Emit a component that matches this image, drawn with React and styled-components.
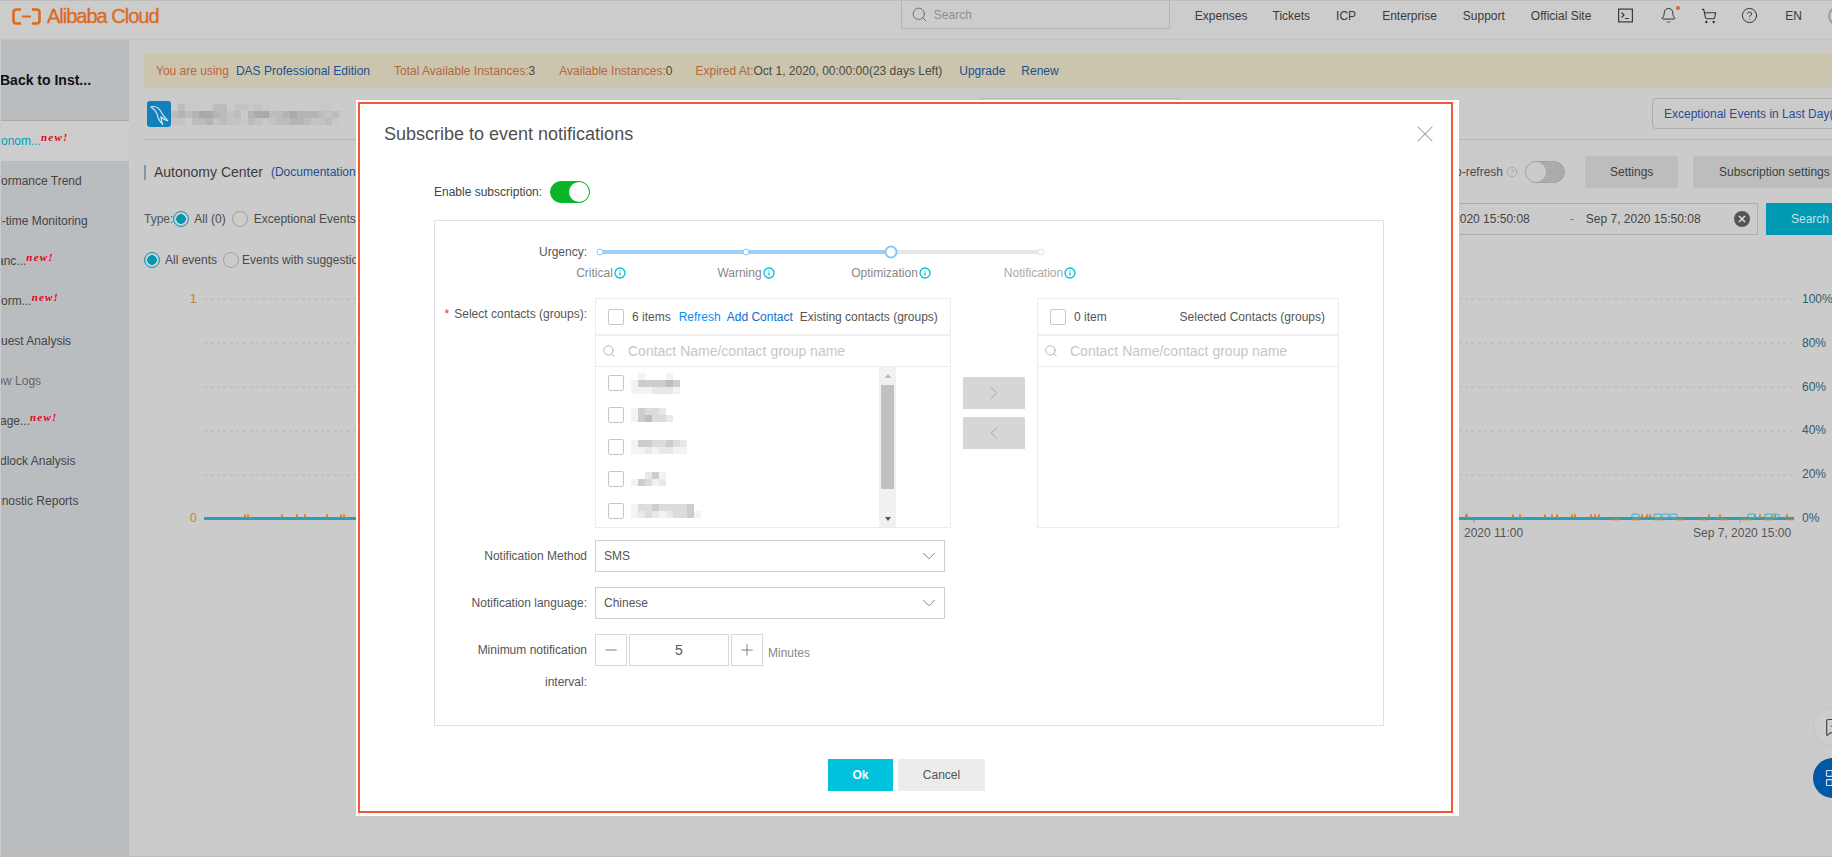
import React from 'react';
import styled, { createGlobalStyle } from 'styled-components';
import { Search, Bell, ShoppingCart, CircleHelp, X, ChevronDown, ChevronLeft, ChevronRight, Minus, Plus, Info, MessageSquareMore, LayoutGrid } from 'lucide-react';

const GlobalStyle = createGlobalStyle`
  html, body {
    margin: 0;
    padding: 0;
    overflow: hidden;
    background: #cbcbcb;
  }
  body, input, button {
    font-family: "Liberation Sans", Arial, sans-serif;
    font-size: 12px;
  }
  * {
    box-sizing: border-box;
  }
`;

// Page frame
const Page = styled.div`
  position: relative;
  width: 1832px;
  height: 857px;
  overflow: hidden;
  display: flex;
  flex-direction: column;
  background: #cbcbcb;
  border-bottom: 1px solid #b9b9b9;
`;

// Top bar
const TopBar = styled.header`
  height: 40px;
  flex: none;
  display: flex;
  align-items: flex-start;
  background: #cccccc;
  border-top: 1px solid #bcbcbc;
  border-bottom: 1px solid #c3c3c3;
  padding-left: 12px;
`;

const Logo = styled.div`
  display: flex;
  align-items: center;
  gap: 6px;
  height: 30px;
  color: #dc6a20;
  font-size: 20px;
  letter-spacing: -1px;
  -webkit-text-stroke: 0.3px #dc6a20;
`;

const TopRight = styled.div`
  margin-left: auto;
  margin-right: -16px;
  display: flex;
  align-items: center;
  height: 29px;
  color: #3a3a3a;
`;

const TopSearch = styled.div`
  width: 269px;
  height: 28px;
  margin-top: -1px;
  margin-right: 25px;
  display: flex;
  align-items: center;
  gap: 6px;
  padding: 0 9px;
  border: 1px solid #b4b4b4;
  border-top: none;
  color: #8f8f8f;
`;

const TopLink = styled.span`
  margin-right: ${(p) => p.$gap || 25}px;
  white-space: nowrap;
`;

const TopIcon = styled.span`
  position: relative;
  display: flex;
  margin-right: ${(p) => p.$gap}px;
`;

const Dot = styled.i`
  position: absolute;
  top: -1px;
  right: -3px;
  width: 4px;
  height: 4px;
  border-radius: 50%;
  background: #d9691f;
`;

const Avatar = styled.span`
  width: 20px;
  height: 20px;
  border-radius: 50%;
  border: 2px solid #8fa3a8;
`;

const Body = styled.div`
  flex: 1;
  display: flex;
  min-height: 0;
`;

// Left nav
const Sidebar = styled.nav`
  width: 129px;
  flex: none;
  background: #b9bdc0;
  border-left: 1px solid #cbcbcb;
  overflow: hidden;
`;

const BackRow = styled.div`
  height: 81px;
  display: flex;
  align-items: center;
  border-bottom: 1px solid #acacac;
  font-size: 14px;
  font-weight: 700;
  color: #111;
  white-space: nowrap;
  margin-left: -1px;
`;

const NavItem = styled.div`
  height: 40px;
  line-height: 40px;
  white-space: nowrap;
  background: ${(p) => (p.$active ? '#cdcdcd' : 'transparent')};
  color: ${(p) => (p.$active ? '#00a0bd' : p.$muted ? '#666' : '#444')};
  overflow: hidden;
`;

const NavLabel = styled.span`
  display: inline-block;
  margin-left: ${(p) => p.$shift}px;
`;

const NewBadge = styled.sup`
  font-family: "Liberation Serif", serif;
  font-size: 11px;
  font-style: italic;
  font-weight: 700;
  letter-spacing: 1.2px;
  line-height: 0;
  color: #e3001b;
  vertical-align: 4px;
`;

// Main area behind the dialog
const Main = styled.main`
  flex: 1;
  min-width: 0;
  padding: 14px 0 0 15px;
`;

const Banner = styled.div`
  height: 34px;
  display: flex;
  align-items: center;
  padding-left: 12px;
  background: #cbc5ae;
  white-space: nowrap;
`;

const BannerText = styled.span`
  color: ${(p) => (p.$dark ? '#4a4a44' : '#b8663e')};
  margin-right: ${(p) => p.$gap || 0}px;
`;

const BannerLink = styled.span`
  color: #1c4f8f;
  margin-right: ${(p) => p.$gap || 0}px;
`;

const InstanceRow = styled.div`
  height: 52px;
  display: flex;
  align-items: flex-start;
  justify-content: space-between;
  padding-top: 11px;
  border-bottom: 1px solid #b6b6b6;
`;

const InstanceName = styled.div`
  display: flex;
  align-items: center;
  padding: 2px 0 0 3px;
`;

const DbIcon = styled.div`
  width: 24px;
  height: 26px;
  display: flex;
  align-items: center;
  justify-content: center;
  border-radius: 3px;
  background: #1380bc;
`;

const EventsButton = styled.div`
  width: 190px;
  height: 31px;
  margin-top: -1px;
  margin-right: -10px;
  display: flex;
  align-items: center;
  padding-left: 11px;
  border: 1px solid #adadad;
  border-radius: 4px;
  color: #284b97;
  white-space: nowrap;
`;

const TabEdge = styled.div`
  position: absolute;
  left: 980px;
  top: 98px;
  width: 200px;
  height: 2px;
  border-top: 1px solid #bbbbbb;
`;

const ToolRow = styled.div`
  height: 32px;
  margin-top: ${(p) => p.$top}px;
  display: flex;
  align-items: center;
  justify-content: space-between;
  white-space: nowrap;
`;

const Group = styled.div`
  display: flex;
  align-items: center;
`;

const SectionTitle = styled.div`
  border-left: 2px solid #7f97a8;
  padding-left: 8px;
  height: 15px;
  line-height: 15px;
  font-size: 14px;
  color: #3c3c3c;
`;

const DocLink = styled.span`
  margin-left: 8px;
  color: #1c4f8f;
`;

const MutedText = styled.span`
  color: ${(p) => p.$color || '#4a4a4a'};
  margin-right: ${(p) => p.$gap || 0}px;
`;

const Radio = styled.span`
  width: 16px;
  height: 16px;
  flex: none;
  margin-right: ${(p) => p.$gap}px;
  border-radius: 50%;
  border: 1px solid ${(p) => (p.$on ? '#0097b2' : '#a0a0a0')};
  background: ${(p) => (p.$on ? 'radial-gradient(circle, #0097b2 0 4.5px, transparent 5px)' : 'transparent')};
`;

const Switch = styled.span`
  display: flex;
  width: 40px;
  height: 22px;
  flex: none;
  justify-content: ${(p) => (p.$on ? 'flex-end' : 'flex-start')};
  border-radius: 11px;
  border: 1px solid ${(p) => (p.$on ? '#0ab52a' : '#a4a4a4')};
  background: ${(p) => (p.$on ? '#0ab52a' : '#ababab')};
`;

const SwitchKnob = styled.i`
  width: 20px;
  height: 20px;
  border-radius: 50%;
  background: ${(p) => (p.$on ? '#ffffff' : '#cbcbcb')};
`;

const GrayButton = styled.div`
  height: 32px;
  width: ${(p) => p.$width}px;
  margin-left: ${(p) => p.$left}px;
  display: flex;
  align-items: center;
  padding-left: ${(p) => p.$pad}px;
  background: #bcbdbc;
  color: #3e3e3e;
`;

const DateBar = styled.div`
  width: 400px;
  height: 32px;
  display: flex;
  align-items: center;
  border: 1px solid #adadad;
  padding-left: 56px;
  color: #444;
`;

const DateDash = styled.span`
  margin: 0 12px 0 40px;
  color: #777;
`;

const ClearIcon = styled.svg`
  margin-left: 33px;
`;

const SearchButton = styled.div`
  width: 66px;
  height: 32px;
  margin-left: 8px;
  display: flex;
  align-items: center;
  padding-left: 25px;
  background: #009ab5;
  color: #c8dfe4;
`;

const SuggestRow = styled.div`
  height: 24px;
  margin-top: 13px;
  display: flex;
  align-items: center;
  white-space: nowrap;
`;

const ChartSvg = styled.svg`
  display: block;
  margin-top: 13px;
`;

// Floating helpers on the right edge
const FloatButton = styled.div`
  position: absolute;
  left: 1813px;
  top: ${(p) => p.$top}px;
  width: 40px;
  height: 40px;
  border-radius: 50%;
  display: flex;
  align-items: center;
  padding-left: 11px;
  background: ${(p) => (p.$blue ? '#0058a6' : '#cdcdcd')};
  border: ${(p) => (p.$blue ? 'none' : '1px solid #c2c2c2')};
  color: ${(p) => (p.$blue ? '#d5e3ef' : '#444')};
`;

// Dialog
const Dialog = styled.section`
  position: absolute;
  left: 356px;
  top: 100px;
  width: 1103px;
  height: 716px;
  display: flex;
  flex-direction: column;
  background: #fff;
  color: #555;
`;

const Marker = styled.div`
  position: absolute;
  left: 1.5px;
  top: 2px;
  width: 1095px;
  height: 711px;
  border: 2px solid #f05a38;
  pointer-events: none;
`;

const DialogHead = styled.div`
  height: 68px;
  display: flex;
  align-items: center;
  justify-content: space-between;
  padding: 0 20px 0 28px;
`;

const DialogTitle = styled.h2`
  margin: 0;
  font-size: 18px;
  font-weight: 400;
  color: #505050;
`;

const EnableRow = styled.div`
  height: 22px;
  margin-top: 13px;
  padding-left: 78px;
  display: flex;
  align-items: center;
  gap: 8px;
  color: #444;
`;

const FormPanel = styled.div`
  width: 950px;
  height: 506px;
  margin: 17px 0 0 78px;
  padding-top: 21px;
  border: 1px solid #e0e0e0;
`;

const FormRow = styled.div`
  display: flex;
  align-items: flex-start;
  gap: 8px;
  margin-top: ${(p) => p.$top || 0}px;
`;

const FieldLabel = styled.div`
  width: 152px;
  flex: none;
  text-align: right;
  line-height: ${(p) => p.$line || 32}px;
  padding-top: ${(p) => p.$pad || 0}px;
  color: #555;
`;

const Required = styled.span`
  color: #f0303c;
  margin-right: 5px;
`;

const SliderTrack = styled.div`
  position: relative;
  width: 446px;
  height: 4px;
  margin: 8px 0 0 3px;
  border-radius: 2px;
  background: linear-gradient(to right, #a0cff5 0 293px, #e8e8e8 293px);
`;

const SliderMark = styled.i`
  position: absolute;
  left: ${(p) => p.$left}px;
  top: 2px;
  width: ${(p) => p.$size}px;
  height: ${(p) => p.$size}px;
  transform: translate(-50%, -50%);
  border-radius: 50%;
  background: #fff;
  border: ${(p) => (p.$big ? 2 : 1.5)}px solid ${(p) => (p.$off ? '#e2e2e2' : '#8cc6f4')};
`;

const LevelRow = styled.div`
  display: flex;
  margin: 1px 0 -1px 92px;
  height: 20px;
`;

const Level = styled.div`
  width: ${(p) => p.$width}px;
  display: flex;
  align-items: center;
  justify-content: center;
  gap: 1px;
  color: ${(p) => (p.$off ? '#aaa' : '#888')};
`;

const Transfer = styled.div`
  display: flex;
  align-items: flex-start;
`;

const TransferPanel = styled.div`
  width: ${(p) => p.$width}px;
  height: 230px;
  border: 1px solid #ececec;
  display: flex;
  flex-direction: column;
`;

const TransferHead = styled.div`
  height: 37px;
  flex: none;
  display: flex;
  align-items: center;
  padding: 0 13px 0 12px;
  border-bottom: 2px solid #efefef;
  color: #555;
  white-space: nowrap;
`;

const Check = styled.span`
  width: 16px;
  height: 16px;
  flex: none;
  border: 1px solid #c8c8c8;
  border-radius: 2px;
  background: #fff;
`;

const Count = styled.span`
  margin-left: 8px;
  margin-right: ${(p) => p.$gap}px;
`;

const HeadLink = styled.span`
  color: ${(p) => p.$color};
  margin-right: 6px;
`;

const HeadTitle = styled.span`
  margin-left: ${(p) => (p.$push ? 'auto' : '1px')};
`;

const TransferSearch = styled.div`
  height: 31px;
  flex: none;
  display: flex;
  align-items: center;
  padding-left: 6px;
  gap: 12px;
  border-bottom: 1px solid #ececec;
  font-size: 14px;
  color: #c6c6c6;
  white-space: nowrap;
`;

const ListArea = styled.div`
  flex: 1;
  display: flex;
  min-height: 0;
`;

const List = styled.div`
  flex: 1;
  overflow: hidden;
`;

const ListRow = styled.div`
  height: 32px;
  display: flex;
  align-items: center;
  gap: 7px;
  padding-left: 12px;
`;

const ScrollBar = styled.div`
  width: 17px;
  margin-right: 54px;
  display: flex;
  flex-direction: column;
  align-items: center;
  background: #f1f1f1;
`;

const ScrollThumb = styled.i`
  width: 13px;
  height: 104px;
  margin-top: 7px;
  background: #c1c1c1;
`;

const ArrowUp = styled.i`
  margin-top: 7px;
  border: 3.5px solid transparent;
  border-top: none;
  border-bottom: 4px solid #b5b5b5;
`;

const ArrowDown = styled.i`
  margin-top: 28px;
  border: 3.5px solid transparent;
  border-bottom: none;
  border-top: 4px solid #555;
`;

const MoveButtons = styled.div`
  width: 62px;
  margin: 79px 12px 0;
  display: flex;
  flex-direction: column;
  gap: 8px;
`;

const MoveButton = styled.div`
  height: 32px;
  display: flex;
  align-items: center;
  justify-content: center;
  background: #d5d6d7;
  color: #a4a4a4;
`;

const SelectBox = styled.div`
  width: 350px;
  height: 32px;
  display: flex;
  align-items: center;
  justify-content: space-between;
  padding: 0 4px 0 8px;
  border: 1px solid #cfcfcf;
  color: #555;
`;

const Stepper = styled.div`
  display: flex;
  gap: 2px;
`;

const StepBox = styled.div`
  width: ${(p) => p.$width}px;
  height: 32px;
  display: flex;
  align-items: center;
  justify-content: center;
  border: 1px solid #d8d8d8;
  font-size: 14px;
  color: #555;
`;

const UnitText = styled.span`
  margin: 12px 0 0 -3px;
  color: #888;
`;

const Footer = styled.div`
  margin: 33px 0 0 472px;
  display: flex;
  gap: 5px;
`;

const FooterButton = styled.div`
  width: ${(p) => p.$width}px;
  height: 32px;
  display: flex;
  align-items: center;
  justify-content: center;
  background: ${(p) => (p.$primary ? '#00c1de' : '#ebecec')};
  color: ${(p) => (p.$primary ? '#fff' : '#555')};
  font-weight: ${(p) => (p.$primary ? 700 : 400)};
`;

// Blurred names, drawn as the mosaic they are in the picture
const lightShades = ['#ffffff', '#f3f3f3', '#e8e8e8', '#dcdcdc', '#cdcdcd', '#bdbdbd'];
const darkShades = ['#cbcbcb', '#c8c8c8', '#c3c3c3', '#bcbcbc', '#b4b4b4', '#a9a9a9'];

const Mosaic = ({ rows, shades = lightShades, cell = 7 }) => (
  <svg width={rows[0].length * cell} height={rows.length * cell}>
    {rows.map((row, y) =>
      [...row].map((c, x) => (
        <rect key={`${x}-${y}`} x={x * cell} y={y * cell} width={cell} height={cell} fill={shades[+c]} />
      ))
    )}
  </svg>
);

const contacts = [
  ['0100010', '1444454', '1112221'],
  ['143320', '145332'],
  ['14433432', '11212211'],
  ['00241', '14312'],
  ['1334333340', '1232123341'],
];

const instanceRows = [
  '031100330221210000000110000',
  '343455432304553345444323100',
  '220334232213212334432231000',
];

const WarnMark = () => <Info size={12} strokeWidth={2.6} color="#00c1de" />;

const LevelLabel = ({ children, width, off }) => (
  <Level $width={width} $off={off}>
    {children}
    <WarnMark />
  </Level>
);

const spikes = [245, 248, 282, 297, 305, 327, 341, 344, 1466, 1467, 1513, 1520, 1545, 1552, 1557, 1572, 1575, 1591, 1595, 1599, 1642, 1647, 1650, 1709, 1720, 1755, 1760, 1775, 1787];
const bumps = [1635, 1657, 1665, 1673, 1751, 1768, 1775];
const gridY = [299, 343, 387, 431, 475];
const percents = ['100%', '80%', '60%', '40%', '20%', '0%'];

const Chart = () => (
  <ChartSvg width="1688" height="265" viewBox="144 285 1688 265" fontFamily="Liberation Sans, Arial, sans-serif" fontSize="12">
    <text x="190" y="303" fill="#c98226">1</text>
    <text x="190" y="522" fill="#c98226">0</text>
    {gridY.map((y) => (
      <line key={y} x1="204" x2="1794" y1={y} y2={y} stroke="#bfbfbf" strokeWidth="2" strokeDasharray="3 3.5" />
    ))}
    {percents.map((t, i) => (
      <text key={t} x="1802" y={303 + i * 43.8} fill="#2f6070">{t}</text>
    ))}
    <rect x="204" y="517" width="1590" height="3" fill="#2e9cb8" />
    {spikes.map((x) => (
      <path key={x} d={`M${x - 1.5} 518 L${x} 513 L${x + 1.5} 518 Z`} fill="#d87a10" />
    ))}
    <line x1="1610" x2="1794" y1="519.5" y2="519.5" stroke="#d87a10" strokeWidth="1.5" strokeDasharray="9 13" />
    {bumps.map((x) => (
      <rect key={x} x={x - 3} y="514" width="7" height="4" rx="1.5" fill="none" stroke="#46b0c6" strokeWidth="1.2" />
    ))}
    <line x1="1474" x2="1474" y1="520" y2="523" stroke="#999" />
    <line x1="1740" x2="1740" y1="520" y2="523" stroke="#999" />
    <text x="1464" y="537" fill="#555">2020 11:00</text>
    <text x="1693" y="537" fill="#555">Sep 7, 2020 15:00</text>
  </ChartSvg>
);

const AlibabaMark = () => (
  <svg width="29" height="17" viewBox="0 0 29 17" fill="none" stroke="#dc6a20" strokeWidth="2.6">
    <path d="M9 1.5H4.5Q1.5 1.5 1.5 4.5V12.5Q1.5 15.5 4.5 15.5H9" />
    <path d="M20 1.5H24.5Q27.5 1.5 27.5 4.5V12.5Q27.5 15.5 24.5 15.5H20" />
    <path d="M10 8.5H19" strokeWidth="2" />
  </svg>
);

const TerminalMark = () => (
  <svg width="15" height="15" viewBox="0 0 15 15" fill="none" stroke="#3a3a3a" strokeWidth="1.2">
    <rect x="0.6" y="1.1" width="13.8" height="12.8" />
    <path d="M3.5 4.5L6 7L3.5 9.5M7 10.5H11" />
  </svg>
);

const DolphinMark = () => (
  <svg width="24" height="26" viewBox="0 0 24 26" fill="none" stroke="#d7e8f2" strokeWidth="1.1">
    <path d="M4 6C8 4.5 12 7 14.5 11.5C16 14.500 18 17 21 20C18 19 15.500 17.500 14 16C14 18 14.500 20 15.500 23C12.500 20.500 11 17 10 13C9 10 7 8 4 6Z" />
  </svg>
);

const navItems = [
  { label: 'Autonom...', shift: -18, fresh: true, active: true },
  { label: 'Performance Trend', shift: -22 },
  { label: 'Real-time Monitoring', shift: -24 },
  { label: 'Instanc...', shift: -23.4, fresh: true },
  { label: 'Perform...', shift: -22, fresh: true },
  { label: 'Request Analysis', shift: -22 },
  { label: 'Slow Logs', shift: -15.3, muted: true },
  { label: 'Storage...', shift: -23, fresh: true },
  { label: 'Deadlock Analysis', shift: -23 },
  { label: 'Diagnostic Reports', shift: -24 },
];

const App = () => (
  <Page>
    <GlobalStyle />
    <TopBar>
      <Logo>
        <AlibabaMark />
        Alibaba Cloud
      </Logo>
      <TopRight>
        <TopSearch>
          <Search size={17} strokeWidth={1.1} color="#555" />
          Search
        </TopSearch>
        <TopLink>Expenses</TopLink>
        <TopLink $gap={26}>Tickets</TopLink>
        <TopLink $gap={26}>ICP</TopLink>
        <TopLink $gap={26}>Enterprise</TopLink>
        <TopLink $gap={26}>Support</TopLink>
        <TopLink $gap={27}>Official Site</TopLink>
        <TopIcon $gap={27}><TerminalMark /></TopIcon>
        <TopIcon $gap={24}>
          <Bell size={17} strokeWidth={1.4} color="#333" />
          <Dot />
        </TopIcon>
        <TopIcon $gap={24}><ShoppingCart size={16} strokeWidth={1.6} color="#333" /></TopIcon>
        <TopIcon $gap={27}><CircleHelp size={17} strokeWidth={1.4} color="#333" /></TopIcon>
        <TopLink $gap={26}>EN</TopLink>
        <Avatar />
      </TopRight>
    </TopBar>
    <TabEdge />
    <Body>
      <Sidebar>
        <BackRow>Back to Inst...</BackRow>
        {navItems.map((item) => (
          <NavItem key={item.label} $active={item.active} $muted={item.muted}>
            <NavLabel $shift={item.shift}>
              {item.label}
              {item.fresh && <NewBadge>new!</NewBadge>}
            </NavLabel>
          </NavItem>
        ))}
      </Sidebar>
      <Main>
        <Banner>
          <BannerText $gap={7}>You are using</BannerText>
          <BannerLink $gap={24}>DAS Professional Edition</BannerLink>
          <BannerText>Total Available Instances:</BannerText>
          <BannerText $dark $gap={24}>3</BannerText>
          <BannerText>Available Instances:</BannerText>
          <BannerText $dark $gap={23}>0</BannerText>
          <BannerText>Expired At:</BannerText>
          <BannerText $dark $gap={17}>Oct 1, 2020, 00:00:00(23 days Left)</BannerText>
          <BannerLink $gap={16}>Upgrade</BannerLink>
          <BannerLink>Renew</BannerLink>
        </Banner>
        <InstanceRow>
          <InstanceName>
            <DbIcon><DolphinMark /></DbIcon>
            <Mosaic rows={instanceRows} shades={darkShades} />
          </InstanceName>
          <EventsButton>Exceptional Events in Last Day(</EventsButton>
        </InstanceRow>
        <ToolRow $top={16}>
          <Group>
            <SectionTitle>Autonomy Center</SectionTitle>
            <DocLink>(Documentation)</DocLink>
          </Group>
          <Group>
            <MutedText $gap={3}>Auto-refresh</MutedText>
            <CircleHelp size={12} strokeWidth={1} color="#888" />
            <MutedText $gap={7} />
            <Switch><SwitchKnob /></Switch>
            <GrayButton $width={93} $left={20} $pad={25}>Settings</GrayButton>
            <GrayButton $width={139} $left={15} $pad={26}>Subscription settings</GrayButton>
          </Group>
        </ToolRow>
        <ToolRow $top={15}>
          <Group>
            <MutedText $color="#555">Type:</MutedText>
            <Radio $on $gap={5} />
            <MutedText $gap={6}>All (0)</MutedText>
            <Radio $gap={6} />
            <MutedText>Exceptional Events</MutedText>
          </Group>
          <Group>
            <DateBar>
              Sep 6, 2020 15:50:08
              <DateDash>-</DateDash>
              Sep 7, 2020 15:50:08
              <ClearIcon width="16" height="16" viewBox="0 0 16 16">
                <circle cx="8" cy="8" r="8" fill="#555" />
                <path d="M5 5L11 11M11 5L5 11" stroke="#ddd" strokeWidth="1.6" />
              </ClearIcon>
            </DateBar>
            <SearchButton>Search</SearchButton>
          </Group>
        </ToolRow>
        <SuggestRow>
          <Radio $on $gap={5} />
          <MutedText $gap={6}>All events</MutedText>
          <Radio $gap={3} />
          <MutedText>Events with suggestions</MutedText>
        </SuggestRow>
        <Chart />
      </Main>
    </Body>
    <FloatButton $top={707}><MessageSquareMore size={20} strokeWidth={1.4} /></FloatButton>
    <FloatButton $top={758} $blue><LayoutGrid size={20} strokeWidth={1.4} /></FloatButton>

    <Dialog>
      <Marker />
      <DialogHead>
        <DialogTitle>Subscribe to event notifications</DialogTitle>
        <X size={28} strokeWidth={0.9} color="#999" />
      </DialogHead>
      <EnableRow>
        Enable subscription:
        <Switch $on><SwitchKnob $on /></Switch>
      </EnableRow>
      <FormPanel>
        <FormRow>
          <FieldLabel $line={20}>Urgency:</FieldLabel>
          <SliderTrack>
            <SliderMark $left={2} $size={7} />
            <SliderMark $left={148} $size={7} />
            <SliderMark $left={293} $size={13} $big />
            <SliderMark $left={443} $size={7} $off />
          </SliderTrack>
        </FormRow>
        <LevelRow>
          <LevelLabel width={148}>Critical</LevelLabel>
          <LevelLabel width={142}>Warning</LevelLabel>
          <LevelLabel width={148}>Optimization</LevelLabel>
          <LevelLabel width={150} off>Notification</LevelLabel>
        </LevelRow>
        <FormRow $top={16}>
          <FieldLabel $line={20} $pad={6}>
            <Required>*</Required>Select contacts (groups):
          </FieldLabel>
          <Transfer>
            <TransferPanel $width={356}>
              <TransferHead>
                <Check />
                <Count $gap={8}>6 items</Count>
                <HeadLink $color="#0d8ef0">Refresh</HeadLink>
                <HeadLink $color="#0b6fd0">Add Contact</HeadLink>
                <HeadTitle>Existing contacts (groups)</HeadTitle>
              </TransferHead>
              <TransferSearch>
                <Search size={14} strokeWidth={1.2} color="#999" />
                Contact Name/contact group name
              </TransferSearch>
              <ListArea>
                <List>
                  {contacts.map((rows, i) => (
                    <ListRow key={i}>
                      <Check />
                      <Mosaic rows={rows} />
                    </ListRow>
                  ))}
                </List>
                <ScrollBar>
                  <ArrowUp />
                  <ScrollThumb />
                  <ArrowDown />
                </ScrollBar>
              </ListArea>
            </TransferPanel>
            <MoveButtons>
              <MoveButton><ChevronRight size={22} strokeWidth={1} /></MoveButton>
              <MoveButton><ChevronLeft size={22} strokeWidth={1} /></MoveButton>
            </MoveButtons>
            <TransferPanel $width={302}>
              <TransferHead>
                <Check />
                <Count $gap={0}>0 item</Count>
                <HeadTitle $push>Selected Contacts (groups)</HeadTitle>
              </TransferHead>
              <TransferSearch>
                <Search size={14} strokeWidth={1.2} color="#999" />
                Contact Name/contact group name
              </TransferSearch>
            </TransferPanel>
          </Transfer>
        </FormRow>
        <FormRow $top={12}>
          <FieldLabel>Notification Method</FieldLabel>
          <SelectBox>
            SMS
            <ChevronDown size={22} strokeWidth={1} color="#777" />
          </SelectBox>
        </FormRow>
        <FormRow $top={15}>
          <FieldLabel>Notification language:</FieldLabel>
          <SelectBox>
            Chinese
            <ChevronDown size={22} strokeWidth={1} color="#777" />
          </SelectBox>
        </FormRow>
        <FormRow $top={15}>
          <FieldLabel>Minimum notification interval:</FieldLabel>
          <Stepper>
            <StepBox $width={32}><Minus size={18} strokeWidth={1} /></StepBox>
            <StepBox $width={100}>5</StepBox>
            <StepBox $width={32}><Plus size={18} strokeWidth={1} /></StepBox>
          </Stepper>
          <UnitText>Minutes</UnitText>
        </FormRow>
      </FormPanel>
      <Footer>
        <FooterButton $width={65} $primary>Ok</FooterButton>
        <FooterButton $width={87}>Cancel</FooterButton>
      </Footer>
    </Dialog>
  </Page>
);

export default App;
